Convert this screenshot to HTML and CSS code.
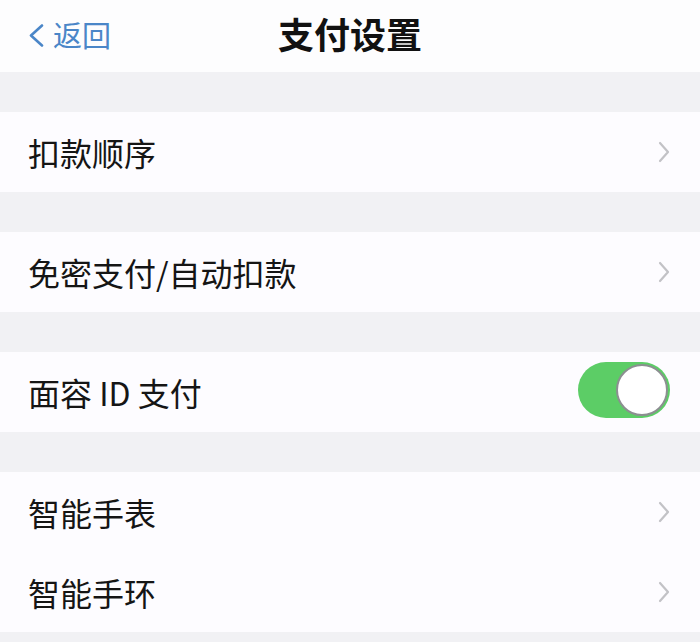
FILE: index.html
```html
<!DOCTYPE html>
<html lang="zh-CN">
<head>
<meta charset="utf-8">
<link rel="stylesheet" href="styles.css">
</head>
<body>
<div class="page">
  <header class="nav">
    <div class="back">
      <svg class="back-icon" width="18" height="23" viewBox="0 0 18 23"><path d="M15 1.5 L4 11.5 L15 21.5" fill="none" stroke="#4a86c8" stroke-width="2.6" stroke-linecap="round" stroke-linejoin="round"/></svg>
      <span class="back-text">返回</span>
    </div>
    <h1 class="title">支付设置</h1>
  </header>

  <section class="group">
    <div class="row"><span class="label">扣款顺序</span><svg class="chev" width="12" height="22" viewBox="0 0 12 22"><path d="M2 2 L10 11 L2 20" fill="none" stroke="#c2c2c6" stroke-width="2.2" stroke-linecap="round" stroke-linejoin="round"/></svg></div>
  </section>

  <section class="group">
    <div class="row"><span class="label">免密支付/自动扣款</span><svg class="chev" width="12" height="22" viewBox="0 0 12 22"><path d="M2 2 L10 11 L2 20" fill="none" stroke="#c2c2c6" stroke-width="2.2" stroke-linecap="round" stroke-linejoin="round"/></svg></div>
  </section>

  <section class="group">
    <div class="row"><span class="label">面容 ID 支付</span><span class="toggle"><span class="knob"></span></span></div>
  </section>

  <section class="group">
    <div class="row"><span class="label">智能手表</span><svg class="chev" width="12" height="22" viewBox="0 0 12 22"><path d="M2 2 L10 11 L2 20" fill="none" stroke="#c2c2c6" stroke-width="2.2" stroke-linecap="round" stroke-linejoin="round"/></svg></div>
    <div class="row"><span class="label">智能手环</span><svg class="chev" width="12" height="22" viewBox="0 0 12 22"><path d="M2 2 L10 11 L2 20" fill="none" stroke="#c2c2c6" stroke-width="2.2" stroke-linecap="round" stroke-linejoin="round"/></svg></div>
  </section>
</div>
</body>
</html>
```
FILE: styles.css
```css
html, body {
  margin: 0;
  padding: 0;
}
body {
  background: #f1f1f4;
  font-family: "Noto Sans CJK SC", "Noto Sans", sans-serif;
  color: #161616;
}
.page {
  width: 700px;
  height: 642px;
  overflow: hidden;
  display: flex;
  flex-direction: column;
  gap: 40px;
}
.nav {
  height: 72px;
  flex: none;
  background: #fdfdfe;
  position: relative;
  display: flex;
  align-items: center;
  justify-content: center;
}
.back {
  position: absolute;
  left: 27px;
  top: 0;
  height: 72px;
  display: flex;
  align-items: center;
  gap: 8px;
  padding-top: 2px;
  box-sizing: border-box;
}
.back-text {
  font-size: 29px;
  color: #4a86c8;
  line-height: 1;
  margin-top: -6px;
}
.back-icon {
  margin-top: -4px;
}
.title {
  margin: 0;
  font-size: 36px;
  font-weight: 700;
  line-height: 1;
  color: #111;
  margin-top: -6px;
}
.group {
  background: #fdfcff;
  display: flex;
  flex-direction: column;
}
.row {
  height: 80px;
  display: flex;
  align-items: center;
  justify-content: space-between;
  padding: 0 30px 0 28px;
}
.label {
  font-size: 32px;
  line-height: 1;
  color: #151515;
}
.toggle {
  width: 92px;
  height: 56px;
  border-radius: 28px;
  background: #5ccd66;
  display: flex;
  align-items: center;
  justify-content: flex-end;
  padding: 2px;
  box-sizing: border-box;
  margin-top: -4px;
}
.knob {
  width: 52px;
  height: 52px;
  border-radius: 50%;
  background: #fff;
  box-sizing: border-box;
  border: 2px solid #8c8f91;
}
```
